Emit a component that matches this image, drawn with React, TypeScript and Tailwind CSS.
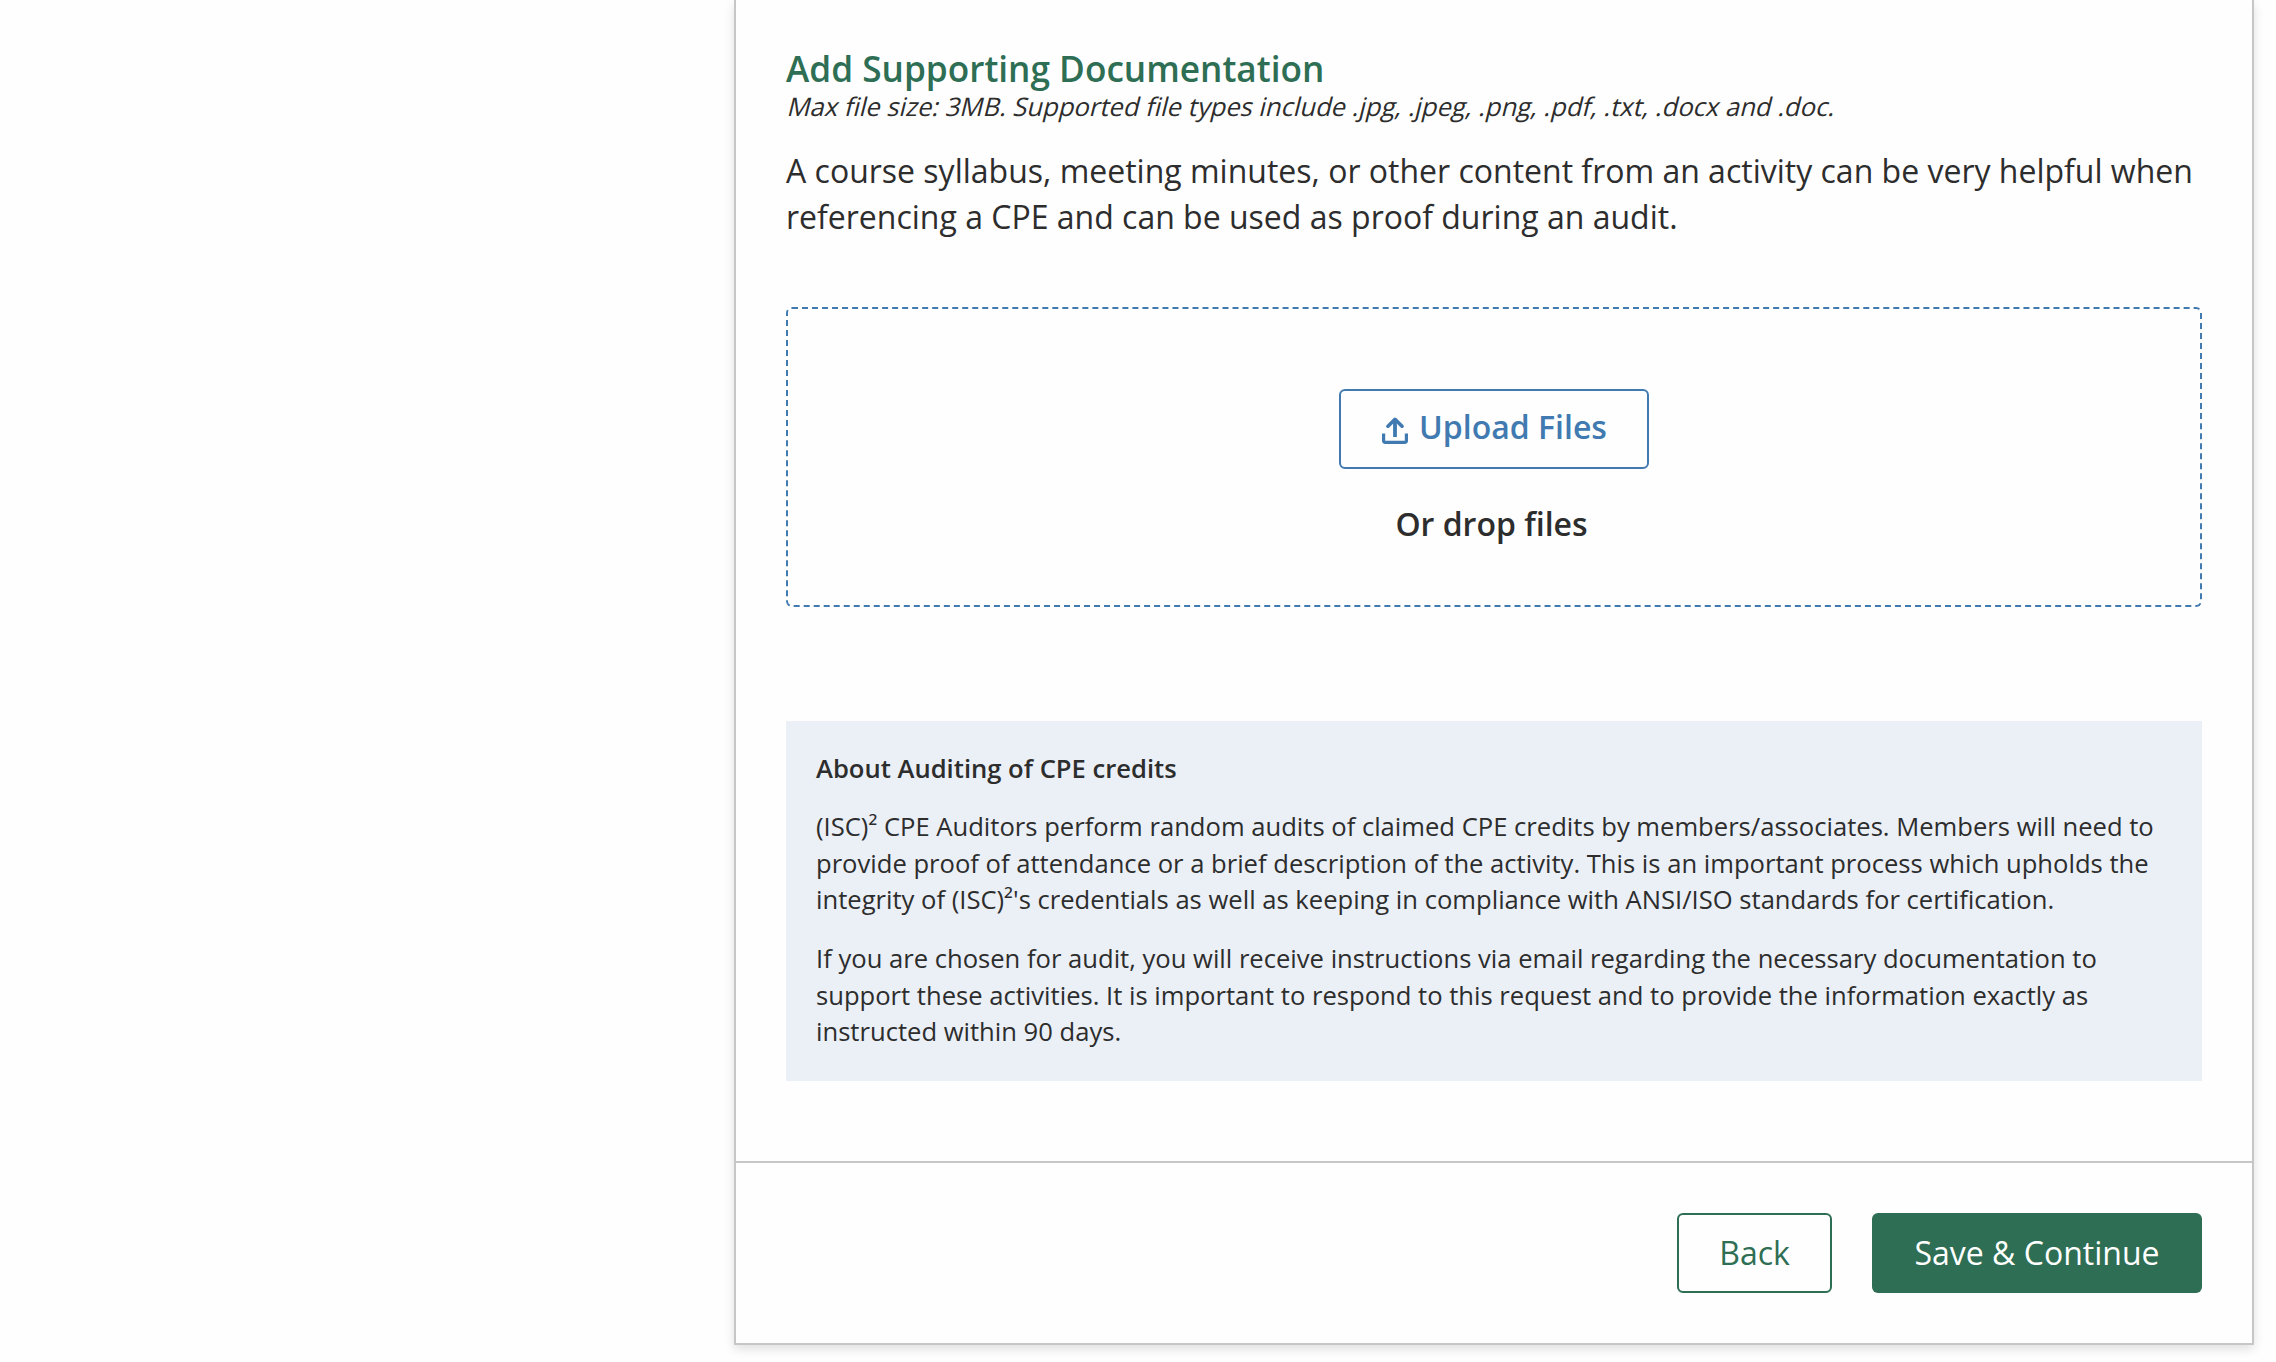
export default function App() {
  return (
    <div className="h-[1362px] w-[2276px] overflow-hidden bg-[#fefefe] font-['Open_Sans',sans-serif] text-[#2d2d2d]">
      <main className="ml-[734px] flex h-[1345px] w-[1520px] flex-col border-2 border-t-0 border-[#c6c6c6] bg-[#fefefe] shadow-[0_4px_10px_rgba(0,0,0,0.12)]">
        <section className="h-[1161px] px-[50px] pt-[43px]">
          <h2 className="text-[35.2px] leading-[50px] font-semibold whitespace-nowrap text-[#2e6e54]">Add Supporting Documentation</h2>
          <p className="-mt-1 text-[25.6px] leading-[36px] whitespace-nowrap">
            <span className="inline-block origin-[0_28px] -skew-x-[14deg]">
              Max file size: 3MB. Supported file types include .jpg, .jpeg, .png, .pdf, .txt, .docx and .doc.
            </span>
          </p>
          <p className="mt-[23px] text-[32px] leading-[46px] whitespace-nowrap">
            A course syllabus, meeting minutes, or other content from an activity can be very helpful when
            <br />
            referencing a CPE and can be used as proof during an audit.
          </p>
          <div className="mt-[67px] flex h-[300px] flex-col items-center rounded-md border-2 border-dashed border-[#407ab1] pt-20">
            <button className="flex h-20 w-[310px] items-center justify-center rounded-md border-2 border-[#407ab1] pb-1 text-[32px] leading-[44px] font-semibold whitespace-nowrap text-[#407ab1]">
              <svg className="mt-[7px] mr-[11px] ml-px h-[27px] w-[26px]" viewBox="0 0 26 27" fill="none" stroke="currentColor">
                <path d="M13 20V2.5" strokeWidth="3.8" />
                <path d="M6 9.2 13 2.3l7 6.9" strokeWidth="3.6" strokeLinejoin="round" strokeLinecap="round" />
                <path d="M1.6 16.5v7.4a1.5 1.5 0 0 0 1.5 1.5h19.8a1.5 1.5 0 0 0 1.5-1.5v-7.4" strokeWidth="3.2" />
              </svg>
              <span>Upload Files</span>
            </button>
            <p className="mt-[33px] mr-[5px] text-[32px] leading-[44px] font-semibold">Or drop files</p>
          </div>
          <aside className="mt-[114px] h-[360px] bg-[#ebf0f7] px-[30px] pt-[30px] text-[25.6px] leading-[36.57px] whitespace-nowrap">
            <h3 className="font-semibold">About Auditing of CPE credits</h3>
            <p className="mt-[21.5px]">
              (ISC)² CPE Auditors perform random audits of claimed CPE credits by members/associates. Members will need to
              <br />
              provide proof of attendance or a brief description of the activity. This is an important process which upholds the
              <br />
              integrity of (ISC)²'s credentials as well as keeping in compliance with ANSI/ISO standards for certification.
            </p>
            <p className="mt-[22.2px]">
              If you are chosen for audit, you will receive instructions via email regarding the necessary documentation to
              <br />
              support these activities. It is important to respond to this request and to provide the information exactly as
              <br />
              instructed within 90 days.
            </p>
          </aside>
        </section>
        <footer className="flex flex-1 items-start justify-end gap-10 border-t-2 border-[#c6c6c6] px-[50px] pt-[50px] text-[32px] leading-[44px]">
          <button className="h-20 w-[155px] rounded-md border-2 border-[#2e6e54] text-[#2e6e54]">Back</button>
          <button className="h-20 w-[330px] rounded-md bg-[#2e6e54] text-white">Save &amp; Continue</button>
        </footer>
      </main>
    </div>
  );
}
